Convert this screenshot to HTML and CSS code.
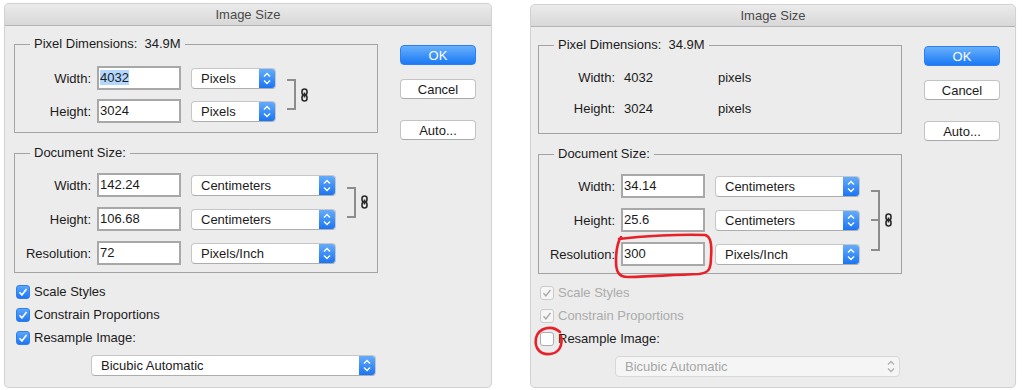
FILE: index.html
```html
<!DOCTYPE html>
<html lang="en">
<head>
    <meta charset="UTF-8">
    <meta name="viewport" content="width=device-width, initial-scale=1.0">
    <title>Image Size</title>
    <link rel="stylesheet" href="styles.css">
</head>
<body>

<div class="desk">

    <!-- before: resample on -->
    <section class="dialog">
        <div class="titlebar">Image Size</div>
        <div class="dialog-body">
            <div class="main-col">
                <fieldset class="group group-pixels">
                    <legend>Pixel Dimensions:&nbsp; 34.9M</legend>
                    <div class="rows">
                        <span class="row-label">Width:</span>
                        <div class="field"><span class="selected">4032</span></div>
                        <div class="popup popup-sm">Pixels
                            <span class="stepper"><svg width="16" height="19" viewBox="0 0 16 19"><path d="M5 7.5l3-3 3 3M5 11.5l3 3 3-3" fill="none" stroke="#fff" stroke-width="1.4"/></svg></span>
                        </div>
                        <div class="link link-2">
                            <span class="bracket"></span>
                            <svg class="chain" width="7" height="14" viewBox="0 0 7 14"><rect x="1" y="1" width="5" height="6" rx="2.5" fill="none" stroke="#2b2b2b" stroke-width="1.6"/><rect x="1" y="7" width="5" height="6" rx="2.5" fill="none" stroke="#2b2b2b" stroke-width="1.6"/><path d="M3.5 4.5v5" stroke="#2b2b2b" stroke-width="1.6"/></svg>
                        </div>
                        <span class="row-label">Height:</span>
                        <div class="field">3024</div>
                        <div class="popup popup-sm">Pixels
                            <span class="stepper"><svg width="16" height="19" viewBox="0 0 16 19"><path d="M5 7.5l3-3 3 3M5 11.5l3 3 3-3" fill="none" stroke="#fff" stroke-width="1.4"/></svg></span>
                        </div>
                    </div>
                </fieldset>

                <fieldset class="group group-doc">
                    <legend>Document Size:</legend>
                    <div class="rows rows-doc">
                        <span class="row-label">Width:</span>
                        <div class="field">142.24</div>
                        <div class="popup popup-lg">Centimeters
                            <span class="stepper"><svg width="16" height="19" viewBox="0 0 16 19"><path d="M5 7.5l3-3 3 3M5 11.5l3 3 3-3" fill="none" stroke="#fff" stroke-width="1.4"/></svg></span>
                        </div>
                        <div class="link link-2">
                            <span class="bracket"></span>
                            <svg class="chain" width="7" height="14" viewBox="0 0 7 14"><rect x="1" y="1" width="5" height="6" rx="2.5" fill="none" stroke="#2b2b2b" stroke-width="1.6"/><rect x="1" y="7" width="5" height="6" rx="2.5" fill="none" stroke="#2b2b2b" stroke-width="1.6"/><path d="M3.5 4.5v5" stroke="#2b2b2b" stroke-width="1.6"/></svg>
                        </div>
                        <span class="row-label">Height:</span>
                        <div class="field">106.68</div>
                        <div class="popup popup-lg">Centimeters
                            <span class="stepper"><svg width="16" height="19" viewBox="0 0 16 19"><path d="M5 7.5l3-3 3 3M5 11.5l3 3 3-3" fill="none" stroke="#fff" stroke-width="1.4"/></svg></span>
                        </div>
                        <span class="row-label">Resolution:</span>
                        <div class="field">72</div>
                        <div class="popup popup-lg">Pixels/Inch
                            <span class="stepper"><svg width="16" height="19" viewBox="0 0 16 19"><path d="M5 7.5l3-3 3 3M5 11.5l3 3 3-3" fill="none" stroke="#fff" stroke-width="1.4"/></svg></span>
                        </div>
                    </div>
                </fieldset>

                <div class="checks">
                    <div class="check-row"><span class="box box-on"><svg width="14" height="14" viewBox="0 0 14 14"><path d="M3.5 7.3l2.4 2.6 4.6-6" fill="none" stroke="#fff" stroke-width="1.6"/></svg></span>Scale Styles</div>
                    <div class="check-row"><span class="box box-on"><svg width="14" height="14" viewBox="0 0 14 14"><path d="M3.5 7.3l2.4 2.6 4.6-6" fill="none" stroke="#fff" stroke-width="1.6"/></svg></span>Constrain Proportions</div>
                    <div class="check-row"><span class="box box-on"><svg width="14" height="14" viewBox="0 0 14 14"><path d="M3.5 7.3l2.4 2.6 4.6-6" fill="none" stroke="#fff" stroke-width="1.6"/></svg></span>Resample Image:</div>
                </div>

                <div class="popup popup-wide">Bicubic Automatic
                    <span class="stepper"><svg width="16" height="19" viewBox="0 0 16 19"><path d="M5 7.5l3-3 3 3M5 11.5l3 3 3-3" fill="none" stroke="#fff" stroke-width="1.4"/></svg></span>
                </div>
            </div>

            <div class="buttons">
                <button class="btn btn-default">OK</button>
                <button class="btn">Cancel</button>
                <button class="btn btn-auto">Auto...</button>
            </div>
        </div>
    </section>

    <!-- after: resample off -->
    <section class="dialog dialog-after">
        <div class="titlebar">Image Size</div>
        <div class="dialog-body">
            <div class="main-col">
                <fieldset class="group group-pixels">
                    <legend>Pixel Dimensions:&nbsp; 34.9M</legend>
                    <div class="rows rows-static">
                        <span class="row-label">Width:</span>
                        <span class="value">4032</span>
                        <span class="unit">pixels</span>
                        <span class="row-label">Height:</span>
                        <span class="value">3024</span>
                        <span class="unit">pixels</span>
                    </div>
                </fieldset>

                <fieldset class="group group-doc">
                    <legend>Document Size:</legend>
                    <div class="rows rows-doc">
                        <span class="row-label">Width:</span>
                        <div class="field">34.14</div>
                        <div class="popup popup-lg">Centimeters
                            <span class="stepper"><svg width="16" height="19" viewBox="0 0 16 19"><path d="M5 7.5l3-3 3 3M5 11.5l3 3 3-3" fill="none" stroke="#fff" stroke-width="1.4"/></svg></span>
                        </div>
                        <div class="link link-3">
                            <span class="bracket"></span>
                            <svg class="chain" width="7" height="14" viewBox="0 0 7 14"><rect x="1" y="1" width="5" height="6" rx="2.5" fill="none" stroke="#2b2b2b" stroke-width="1.6"/><rect x="1" y="7" width="5" height="6" rx="2.5" fill="none" stroke="#2b2b2b" stroke-width="1.6"/><path d="M3.5 4.5v5" stroke="#2b2b2b" stroke-width="1.6"/></svg>
                        </div>
                        <span class="row-label">Height:</span>
                        <div class="field">25.6</div>
                        <div class="popup popup-lg">Centimeters
                            <span class="stepper"><svg width="16" height="19" viewBox="0 0 16 19"><path d="M5 7.5l3-3 3 3M5 11.5l3 3 3-3" fill="none" stroke="#fff" stroke-width="1.4"/></svg></span>
                        </div>
                        <span class="row-label">Resolution:</span>
                        <div class="field">300</div>
                        <div class="popup popup-lg">Pixels/Inch
                            <span class="stepper"><svg width="16" height="19" viewBox="0 0 16 19"><path d="M5 7.5l3-3 3 3M5 11.5l3 3 3-3" fill="none" stroke="#fff" stroke-width="1.4"/></svg></span>
                        </div>
                    </div>
                </fieldset>

                <div class="checks">
                    <div class="check-row is-disabled"><span class="box box-dim"><svg width="14" height="14" viewBox="0 0 14 14"><path d="M3.5 7.3l2.4 2.6 4.6-6" fill="none" stroke="#a9a9a9" stroke-width="1.5"/></svg></span>Scale Styles</div>
                    <div class="check-row is-disabled"><span class="box box-dim"><svg width="14" height="14" viewBox="0 0 14 14"><path d="M3.5 7.3l2.4 2.6 4.6-6" fill="none" stroke="#a9a9a9" stroke-width="1.5"/></svg></span>Constrain Proportions</div>
                    <div class="check-row"><span class="box"></span>Resample Image:</div>
                </div>

                <div class="popup popup-wide popup-off">Bicubic Automatic
                    <span class="stepper"><svg width="16" height="19" viewBox="0 0 16 19"><path d="M5 7.5l3-3 3 3M5 11.5l3 3 3-3" fill="none" stroke="#b0b0b0" stroke-width="1.3"/></svg></span>
                </div>
            </div>

            <div class="buttons">
                <button class="btn btn-default">OK</button>
                <button class="btn">Cancel</button>
                <button class="btn btn-auto">Auto...</button>
            </div>
        </div>

        <!-- hand drawn marks -->
        <svg class="ink" width="486" height="384" viewBox="0 0 486 384">
            <path d="M88 234C110 231 150 229 174 230C180 231 181 240 180 252C180 264 178 268 168 269C140 270 110 272 97 272C87 272 85 266 85 256C85 245 86 238 90 232" fill="none" stroke="#e8202a" stroke-width="2.6" stroke-linecap="round"/>
            <path d="M29 327C21 320 8 322 5 333C3 344 10 350 19 349C28 348 32 341 30 331" fill="none" stroke="#e8202a" stroke-width="2.6" stroke-linecap="round"/>
        </svg>
    </section>

</div>

</body>
</html>
```

FILE: styles.css
```css
body {
    margin: 0;
    background: #fff;
    font-family: "Liberation Sans", Arial, sans-serif;
    font-size: 13px;
    color: #1b1b1b;
}
.desk {
    display: flex;
    gap: 38px;
    padding: 3px 0 0 4px;
}
.dialog {
    position: relative;
    width: 488px;
    background: #ececec;
    border: 1px solid #d2d2d2;
    border-radius: 5px;
    box-sizing: border-box;
    box-shadow: 0 0 1px rgba(0, 0, 0, 0.08);
}
.dialog-after {
    margin-top: 1px;
    width: 486px;
}
.dialog-after .dialog-body {
    padding-left: 7px;
}
.titlebar {
    height: 21px;
    line-height: 21px;
    text-align: center;
    color: #4a4a4a;
    background: linear-gradient(#ebebeb, #d8d8d8);
    border-bottom: 1px solid #b4b4b4;
    border-radius: 5px 5px 0 0;
}
.dialog-body {
    display: flex;
    align-items: flex-start;
    padding: 10px 0 10px 9px;
}
.main-col {
    width: 364px;
}

/* group boxes */
.group {
    margin: 0;
    padding: 14px 0 9px 0;
    border: 1px solid #a3a3a3;
    min-width: 0;
}
.group legend {
    margin-left: 15px;
    padding: 0 4px;
    line-height: 16px;
}
.group-doc {
    margin-top: 12px;
    padding: 12px 0 7px 0;
}
.rows {
    display: grid;
    grid-template-columns: 76px 90px max-content max-content;
    justify-content: start;
    grid-auto-rows: 24px;
    row-gap: 9px;
    align-items: center;
    justify-items: start;
}
.rows-doc {
    row-gap: 10px;
}
.rows-static {
    row-gap: 7px;
    margin-top: -2px;
    margin-bottom: 4px;
}
.row-label {
    grid-column: 1;
    justify-self: end;
}
.field {
    grid-column: 2;
    margin-left: 6px;
    width: 84px;
    height: 24px;
    box-sizing: border-box;
    border: 2px solid #a8a8a8;
    background: #fff;
    padding-left: 1px;
    line-height: 20px;
}
.selected {
    background: #b3d7ff;
}
.value {
    grid-column: 2;
    margin-left: 9px;
}
.unit {
    grid-column: 3;
    margin-left: 13px;
}

/* popup menus */
.popup {
    grid-column: 3;
    position: relative;
    margin-left: 10px;
    height: 21px;
    box-sizing: border-box;
    border: 1px solid #c6c6c6;
    border-bottom-color: #adadad;
    border-radius: 4px;
    background: #fff;
    padding-left: 9px;
    line-height: 19px;
    display: flex;
    justify-content: space-between;
}
.popup-sm {
    width: 85px;
}
.popup-lg {
    width: 145px;
}
.popup-wide {
    width: 285px;
    margin: 6px 0 0 77px;
}
.stepper {
    width: 16px;
    height: 19px;
    background: linear-gradient(#64acfb, #1b74f2);
    border-radius: 0 3px 3px 0;
}
.popup-off {
    background: #f5f5f5;
    border-color: #d8d8d8;
    color: #a6a6a6;
}
.popup-off .stepper {
    background: none;
}

/* link brackets */
.link {
    grid-column: 4;
    grid-row: 1 / span 2;
    margin-left: 11px;
    display: flex;
    align-items: center;
    gap: 5px;
}
.link-3 {
    grid-row: 1 / span 3;
}
.bracket {
    position: relative;
    width: 7px;
    height: 27px;
    border: 2px solid #8d8d8d;
    border-left: none;
}
.link-3 .bracket {
    height: 57px;
}
.link-3 .bracket::after {
    content: "";
    position: absolute;
    left: 0;
    top: 27px;
    width: 7px;
    height: 2px;
    background: #8d8d8d;
}

/* checkboxes */
.checks {
    margin-top: 7px;
}
.check-row {
    display: flex;
    align-items: center;
    gap: 4px;
    height: 23px;
    padding-left: 2px;
}
.box {
    width: 14px;
    height: 14px;
    box-sizing: border-box;
    border: 1px solid #acacac;
    border-radius: 3px;
    background: #fff;
    display: flex;
}
.box svg {
    margin: -1px;
}
.box-on {
    border-color: #2f7ef2;
    background: linear-gradient(#5aa6fc, #1f76f2);
}
.box-dim {
    border-color: #cbcbcb;
    background: #f6f6f6;
}
.is-disabled {
    color: #ababab;
}

/* buttons */
.buttons {
    display: flex;
    flex-direction: column;
    margin: 9px 0 0 22px;
}
.btn {
    width: 76px;
    height: 20px;
    margin-bottom: 14px;
    padding: 0;
    font: inherit;
    color: #1b1b1b;
    background: #fff;
    border: 1px solid #c3c3c3;
    border-bottom-color: #a9a9a9;
    border-radius: 4px;
}
.btn-default {
    color: #fff;
    background: linear-gradient(#68b0fb, #1a79f5);
    border-color: #2a80f2;
}
.btn-auto {
    margin-top: 7px;
}

.ink {
    position: absolute;
    left: 0;
    top: 0;
    pointer-events: none;
}
```
